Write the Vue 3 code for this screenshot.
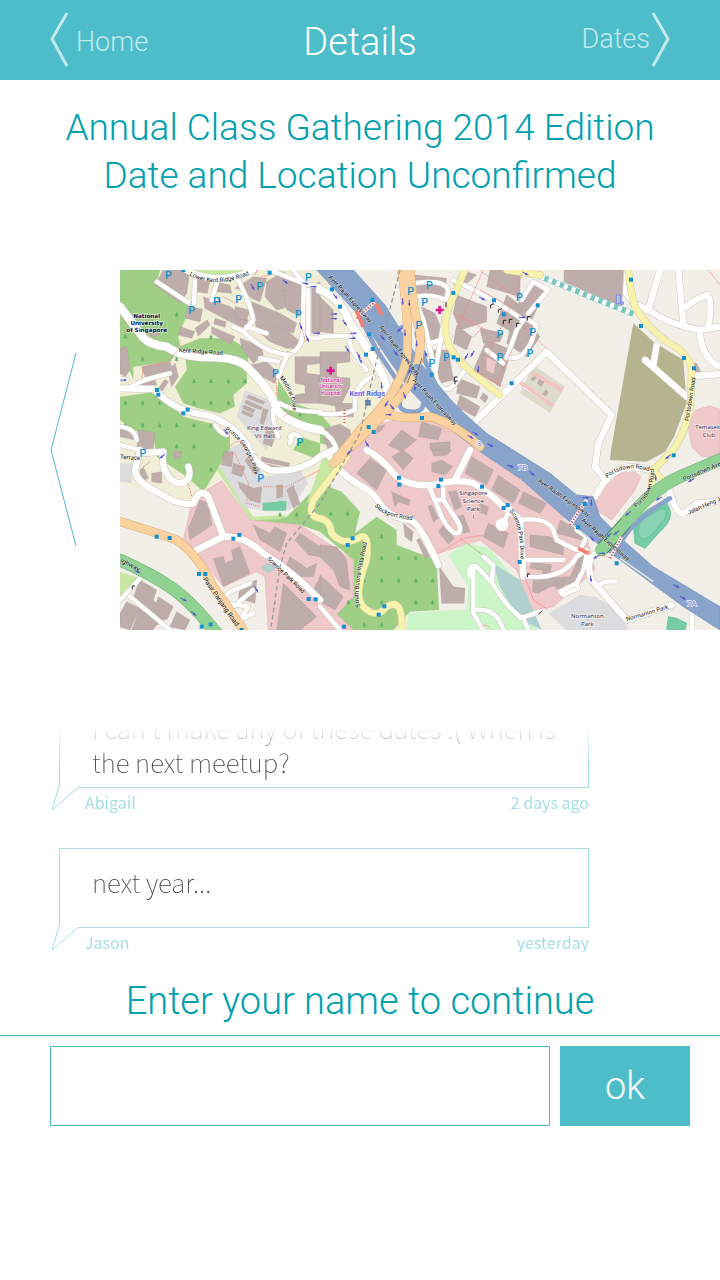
<script setup>
import { ref } from 'vue'

const name = ref('')

const comments = [
  { text: "I can't make any of these dates :( When is the next meetup?", author: 'Abigail', when: '2 days ago' },
  { text: 'next year...', author: 'Jason', when: 'yesterday' },
]

const campus = [
  '0,0 600,0 690,130 790,330 800,440 700,540 620,600 600,620 480,640 310,620 240,670 215,700 100,660 0,640',
]
const forest = [
  '0,0 120,0 110,40 210,110 175,200 180,240 150,275 40,290 40,330 0,230',
  '165,235 240,205 330,205 385,240 380,340 340,375 345,410 300,430 235,415 190,400 165,350 200,300 195,240',
  '0,380 110,365 190,440 270,460 330,500 330,545 310,570 250,665 200,620 110,560 100,500 40,480 0,450',
  '475,330 520,400 600,425 600,480 500,440 470,390',
  '540,500 600,520 600,570 520,540',
  '600,430 650,490 690,540 600,520',
  '390,750 500,740 600,640 665,665 720,725 705,790 770,740 830,780 830,825 950,870 957,1020 870,1025 820,1080 700,1080 650,1033 700,980 700,870 600,785 540,765',
]
const meadow = [
  '300,590 400,740 500,735 560,700 610,560 640,555 660,600 610,660 560,700 480,748 390,750 290,600',
  '215,0 400,0 350,25 250,20',
  '0,905 60,925 0,1000',
]
const pink = [
  '690,560 740,470 850,445 960,445 1060,510 1200,620 1310,700 1400,800 1425,900 1300,1010 1235,1020 1190,900 1080,810 955,850 920,800 800,720 720,650 640,600',
  '305,632 390,750 540,765 700,870 700,980 650,1033 700,1080 445,1080 435,920 410,905 310,950 240,860 190,810 215,700 250,665',
  '1770,408 1725,420 1705,470 1715,530 1745,560 1800,560 1800,418',
  '1430,675 1500,610 1545,605 1562,620 1545,660 1475,750 1430,720',
]
const pale = [
  '985,855 1040,820 1110,835 1190,935 1250,1080 860,1080 865,1030 1040,1018 1045,950',
]
const grey = [
  '375,360 470,400 470,440 440,540 350,440',
  '330,535 385,510 430,620 540,600 565,640 510,720 420,720 370,710 300,590',
  '1380,975 1425,980 1510,1030 1525,1080 1340,1080 1285,1030',
  '0,580 40,580 35,640 0,635',
]
const olive = ['1540,160 1600,215 1690,270 1700,400 1662,500 1635,545 1580,575 1470,570 1473,540']
const water = ['1120,880 1200,930 1265,1080 1195,1045 1140,950', '425,890 445,878 468,893 450,908 430,902']

const buildings = [
  '130,0 210,0 200,70 180,100 105,45', '230,20 270,30 262,70 228,65', '285,35 330,45 335,70 285,65',
  '205,108 248,118 240,155 195,145', '250,80 330,110 385,150 375,175 320,150 255,115', '180,170 225,185 215,205 175,195',
  '225,175 262,150 270,165 235,198', '285,145 318,155 315,172 282,162', '275,170 345,200 330,222 275,190',
  '345,55 400,20 440,25 420,95 395,85 370,60', '345,110 390,120 380,150 345,145', '395,95 480,130 530,160 520,190 440,160 395,145',
  '405,150 500,180 540,215 530,235 500,235 450,215 410,180', '360,205 425,230 430,255 400,280 365,235',
  '390,285 440,275 475,310 465,340 395,305', '440,35 490,5 550,50 545,100 470,120 435,80', '490,60 550,75 545,140 500,120',
  '0,235 20,230 30,300 15,320 0,310', '65,290 150,275 155,290 165,280 175,320 155,350 145,310 75,320', '90,175 120,190 110,200 90,198',
  '115,355 135,328 145,335 128,362', '55,335 105,330 110,345 60,350',
  '575,45 600,35 600,190 575,190', '525,260 600,260 600,280 560,285 560,310 600,315 600,400 525,400 525,375 555,370 555,345 525,340',
  '600,80 640,120 640,190 600,185', '600,245 690,245 690,275 650,280 650,320 690,325 690,350 660,410 600,400',
  '645,400 700,400 700,440 650,440', '620,475 660,462 690,480 697,520 680,540 625,540 612,505',
  '385,375 435,395 430,402 382,384', '378,390 428,412 423,420 375,400', '372,405 405,420 398,430 368,414', '368,420 400,435 395,442 365,430', '430,415 445,420 430,465 420,458', '440,470 470,485 455,530 430,520',
  '55,480 105,488 100,535 50,540', '0,470 45,490 45,510 0,500',
  '905,110 945,130 975,205 930,215', '940,240 985,240 1000,330 960,340', '885,15 980,25 970,90 890,70',
  '1010,75 1100,110 1100,155 1020,180 1000,130', '1010,165 1055,200 1040,240 1000,220', '1100,210 1175,240 1140,350 1060,300',
  '1080,175 1150,190 1140,215 1090,220', '1110,0 1200,0 1200,80 1100,50', '1160,75 1200,105 1200,200 1130,160', '1190,100 1260,200 1220,260 1160,220',
  '1015,325 1080,350 1070,385 1010,370', '1020,375 1080,410 1065,440 1010,410', '1090,368 1105,380 1095,398 1080,385',
  '1230,40 1275,65 1235,150 1190,110', '1332,0 1510,0 1505,110 1332,35', '1000,45 1040,5 1070,15 1040,40', '1240,320 1255,318 1240,332 1232,328', '1258,325 1273,335 1262,350 1252,340', '1277,360 1285,366 1277,378 1268,372',
  '905,455 965,475 955,510 895,500', '845,480 890,510 845,545 805,525', '930,520 990,515 990,540 930,540', '770,470 795,465 785,480 770,490',
  '750,565 800,600 770,660 710,610', '850,540 880,565 850,600 815,560', '935,580 965,570 998,590 975,615 935,605', '935,540 995,540 980,555 940,558',
  '1055,560 1120,600 1100,645 1035,610', '1135,615 1200,660 1180,700 1115,660', '1080,700 1105,710 1100,735 1075,725',
  '815,665 870,690 865,705 835,695 825,710', '985,665 1010,663 1025,710 1005,720', '935,705 955,745 940,757 925,710', '1030,735 1050,785 1030,790 1010,740', '970,765 1003,805 985,823 955,785', '1105,760 1165,790 1150,835 1090,800',
  '850,760 880,785 875,815 855,800', '890,810 900,805 930,860 915,865', '958,890 1000,950 1035,955 1032,1000 965,1000',
  '600,825 650,830 680,870 690,960 660,950 640,900 600,860', '600,915 670,980 645,1020 600,995',
  '240,690 265,700 275,765 210,810 205,775', '280,865 310,860 315,880 340,870 335,840 360,830 390,910 310,950', '400,765 450,790 465,770 500,790 480,845 455,830 420,810',
  '540,790 600,830 600,860 565,855 525,810', '510,860 560,895 590,880 580,920 545,920 500,885', '490,940 590,1040 540,1080 470,1080', '600,920 600,985 580,960',
  '60,930 110,960 100,990 145,1040 105,1070 40,980', '170,1025 210,1050 195,1080 150,1070', '20,995 60,1015 30,1080 0,1070 0,1030', '115,980 160,1010 140,1050 100,1030', '60,1015 110,1060 100,1080 35,1080',
  '60,600 90,575 70,590 85,625 60,640', '95,610 125,605 125,640 95,635', '160,545 185,545 180,565 162,565',
  '310,545 340,545 335,590 305,585', '340,580 375,590 365,620 335,610', '355,635 400,655 425,650 420,700 390,690 360,655', '500,660 520,645 540,700 520,715', '470,645 488,645 488,680 470,685', '425,560 510,580 505,590 425,575', '430,580 500,595 500,605 435,595', '385,560 420,600 400,610 375,570',
  '1210,665 1280,700 1260,730 1195,700', '1230,795 1290,800 1330,820 1330,855 1230,830', '1320,750 1390,790 1385,810 1310,790', '1235,875 1295,885 1290,905 1230,895', '1240,925 1350,920 1385,845 1405,850 1370,940 1290,950 1255,970 1237,965',
  '1268,898 1292,898 1292,922 1268,922', '1308,932 1332,932 1332,956 1308,956', '1720,280 1730,280 1742,305 1722,308', '360,950 410,930 405,1000 355,985',
]

const minor = [
  'M110,35 L205,98', 'M225,20 L222,100', 'M290,40 L275,90', 'M350,20 Q395,110 400,150 L370,185 L340,170', 'M370,185 Q430,245 500,255 Q550,240 548,180 L552,40 L520,0', 'M380,170 L440,190',
  'M600,50 L550,40 L450,0', 'M565,60 L565,205 L600,205', 'M600,200 L680,198', 'M500,260 L475,320', 'M475,275 L420,265',
  'M35,350 Q60,330 150,310', 'M0,325 L20,330', 'M0,470 Q45,475 50,510', 'M0,525 L60,540', 'M285,465 Q300,490 320,495', 'M510,500 Q520,485 540,500 M515,500 L510,520',
  'M600,425 Q520,425 480,400', 'M465,400 Q450,440 475,500',
  'M690,200 Q680,230 740,300', 'M760,320 Q700,340 705,420 Q650,440 600,430', 'M600,480 Q640,500 650,540',
  'M870,0 Q880,90 910,150 Q930,230 950,330 Q980,390 1020,320 L1035,300', 'M880,40 Q970,25 985,60 L980,90 Q930,70 890,80', 'M930,220 L990,200', 'M940,340 L980,100',
  'M1000,30 Q1110,80 1210,150', 'M1160,265 L1190,180 L1210,150', 'M1150,280 L1100,240 M1160,260 Q1210,280 1240,200 L1250,165 L1225,150',
  'M1225,130 L1285,60 L1240,35 L1205,90', 'M1260,380 L1215,350', 'M1520,0 L1515,70 L1540,100',
  'M600,1010 L660,1080', 'M60,925 Q30,960 0,990', 'M30,980 L150,1080',
  'M310,985 L330,965 L390,940 M340,1010 L400,960 M320,1000 L385,1010 L360,1050 L400,1030',
  'M930,655 L965,740 Q990,790 1012,790 Q1030,780 1010,750 L970,690 L970,655', 'M945,690 L970,690', 'M1170,715 L1150,760',
  'M1200,750 Q1280,740 1300,780 L1310,810 L1370,840 M1370,780 L1400,800 L1380,840 M1200,870 L1330,870 M1220,920 Q1330,930 1370,860 L1400,840 M1400,855 L1390,900 L1370,940',
  'M1320,965 L1370,940 L1375,955 L1330,975 Z', 'M1050,920 Q1040,880 1070,890 Q1120,940 1130,960 Q1160,1010 1200,1040 M1060,890 L1060,1030 L1090,1080 M1060,1020 Q1130,1010 1150,1080 M1090,860 L1120,885 L1115,940', 'M1200,1045 L1260,1025 M1210,1045 L1225,1080',
  'M1440,945 Q1450,930 1490,935', 'M1717,1030 L1717,1080',
]
const major = [
  'M200,0 Q290,50 400,0',
  'M0,355 L100,357 L120,375 Q180,430 260,435 Q330,455 380,520 Q400,580 450,600 Q540,610 600,560 L640,540',
  'M1060,460 L1280,245 L1475,435 L1435,520 L1425,590 L1450,620',
  'M1540,100 L1585,120 Q1650,165 1740,180 L1800,170', 'M1620,0 L1585,120', 'M1675,0 L1690,160', 'M1740,180 Q1740,260 1800,290', 'M1700,110 Q1720,90 1760,75 Q1780,90 1765,165', 'M1720,318 L1800,312', 'M1610,225 L1600,285 M1575,270 L1700,380',
  'M60,540 L45,600 Q50,640 120,670 Q180,710 220,700 Q240,650 265,680 L310,800', 'M60,550 L130,545 Q120,610 170,640 Q220,640 205,590',
  'M220,845 L310,800 Q370,795 430,850 Q520,905 600,990',
  'M630,560 Q660,610 710,640 Q760,665 780,700 Q800,740 870,750 Q900,760 955,885', 'M740,540 Q780,560 830,620 Q870,650 940,645 Q1010,625 1060,640 Q1110,670 1150,710 Q1180,730 1200,750 L1210,920',
  'M1005,630 L1050,540', 'M1425,680 L1450,640 Q1500,570 1590,600', 'M1640,640 Q1670,740 1690,730 L1730,700 Q1770,700 1800,690',
  'M1445,845 Q1390,860 1415,930 L1520,1050 L1655,1005',
]
const wide = [
  'M0,110 Q30,150 60,190 Q80,225 140,230 Q180,260 260,262 Q360,260 390,300 Q460,370 470,420 Q510,465 600,480',
  'M600,60 Q660,80 690,160 Q750,240 790,320 L810,390',
]
const yellow = [
  'M1035,0 L1000,80 Q960,160 985,220 Q1000,260 1060,310 L1138,375', 'M1160,0 L1260,15', 'M1525,0 Q1530,60 1545,110 Q1580,170 1640,215 Q1710,250 1715,300 L1712,400 Q1700,480 1660,540 L1600,600 L1595,650', 'M1600,600 L1635,640',
  'M600,745 Q630,750 635,790 Q670,830 715,805 Q750,780 740,870 Q700,980 730,1010 Q770,1050 800,1010 Q850,980 845,1080', 'M600,745 Q560,740 580,690 Q620,640 680,560',
]

const trees = [
  [170, 135], [16, 200], [68, 268], [170, 268], [273, 202], [222, 335], [273, 335], [325, 335], [375, 335], [222, 400], [273, 400], [325, 400], [16, 400], [68, 400], [119, 400], [16, 467], [68, 467], [119, 467], [170, 467], [222, 467], [273, 467], [170, 530], [222, 530], [273, 600], [530, 735], [480, 735],
  [632, 732], [683, 732], [785, 800], [785, 865], [836, 865], [887, 865], [733, 932], [785, 932], [836, 932], [887, 932], [938, 932], [785, 998], [887, 998], [938, 998], [733, 1065], [785, 1065], [490, 400], [540, 435], [685, 998],
]
const parking = [
  [145, 18], [215, 122], [290, 96], [356, 88], [420, 50], [535, 135], [565, 24], [466, 310], [540, 517], [69, 552], [422, 625], [872, 65], [928, 46], [914, 97], [897, 168], [979, 262], [936, 280], [1140, 193], [1140, 264], [1238, 187], [1230, 250], [1198, 82],
]
const stops = [
  [190, 0], [449, 8], [111, 360], [115, 374], [203, 419], [190, 430], [636, 58], [660, 110], [757, 90], [747, 193], [758, 237], [738, 254], [935, 314], [1001, 262], [1014, 269], [1000, 69], [1122, 91], [1151, 133], [1175, 340], [906, 444], [746, 471], [761, 486], [1533, 29], [1563, 168], [1692, 264], [1722, 295], [1253, 106],
  [110, 800], [149, 804], [358, 795], [340, 806], [237, 912], [256, 912], [566, 987], [587, 988], [245, 1070], [272, 1063], [365, 1080], [837, 623], [838, 644], [963, 629], [955, 648], [1086, 650], [1163, 705], [1151, 714], [1199, 876], [698, 805], [683, 825], [793, 1009], [776, 1034], [672, 1070], [1394, 702], [1374, 772], [1490, 880], [1661, 556],
]
const arrows = [
  [495, 35, 35], [555, 40, 10], [580, 50, 0], [542, 168, 70], [562, 205, 70], [590, 190, 0], [10, 330, 0], [397, 50, 60], [299, 90, 90], [317, 485, 50], [642, 132, 0], [642, 146, 0], [673, 157, 50], [700, 190, 0], [697, 205, 0], [681, 236, 60], [720, 270, 60], [645, 78, 50], [715, 255, 60], [848, 94, 90], [868, 98, 90], [840, 178, 140], [855, 188, 90], [786, 202, 50], [826, 248, 50], [890, 220, 90], [917, 250, 70], [884, 350, 80], [853, 375, 70], [800, 400, 120], [815, 410, 50], [785, 346, 90], [805, 434, 0], [1085, 85, 30], [1040, 258, 120], [1058, 250, 120], [1075, 297, 100], [1050, 500, 30], [1065, 490, 30], [1110, 525, 30], [740, 520, 60],
  [128, 558, 140], [190, 988, 30], [220, 1030, 40], [50, 903, 30], [408, 957, 60], [690, 545, 140], [1170, 588, 20], [1235, 610, 40], [1397, 683, 0], [1414, 698, 90], [1415, 805, 50], [1430, 860, 150], [1445, 850, 0], [1412, 925, 80], [1525, 730, 140], [1490, 788, 140], [1468, 795, 140], [1618, 685, 150], [1715, 630, 150], [1645, 560, 140], [1606, 620, 80], [1668, 948, 30], [1687, 983, 30], [1215, 10, 30], [1205, 142, 0], [870, 300, 110], [862, 270, 70],
]
const redPaths = [
  'M180,210 L180,235 L140,275 L70,290 L65,325', 'M545,170 L555,215', 'M500,245 L520,250', 'M455,335 L470,340 L470,380', 'M310,80 L345,100', 'M515,425 L490,440', 'M205,640 L215,680', 'M330,530 Q350,500 380,530', 'M315,560 L345,550 L385,640 L380,700 L420,710', 'M430,650 L500,650 L600,600', 'M955,850 L1030,805 L1090,795 M1020,805 L1090,855', 'M1215,920 L1240,990 L1285,1020', 'M1445,857 L1480,865', 'M1765,0 L1800,45', 'M1200,160 L1280,235',
  'M1000,130 L1140,200 M1080,60 L1200,125 M1090,0 L1010,180 M1060,200 L1090,170 M1180,90 L1090,290 M1060,300 L1150,350 M1175,240 L1130,340', 'M1085,5 L1200,90', 'M410,0 L405,15', 'M425,20 L450,15', 'M1205,15 L1190,60', 'M1085,1070 Q1100,1060 1110,1075',
]
const rail = 'M840,0 L760,310 L720,490 L600,700 L500,820 L480,890 L452,1080'

const straight = [
  { x: 176, y: 246, a: 4, t: 'Kent Ridge Road' },
  { x: 625, y: 22, a: 48, t: 'Ayer Rajah Expressway' },
  { x: 777, y: 172, a: 52, t: 'Ayer Rajah Expressway' },
  { x: 877, y: 332, a: 47, t: 'Ayer Rajah Expressway' },
  { x: 1253, y: 635, a: 35, t: 'Ayer Rajah Expressway' },
  { x: 1383, y: 752, a: 41, t: 'Ayer Rajah Expressway' },
  { x: 440, y: 867, a: 44, t: 'Science Park Road' },
  { x: 1706, y: 454, a: -81, t: 'Portsdown Road' },
  { x: 1692, y: 634, a: -24, t: 'Portsdown Ave' },
  { x: 1706, y: 734, a: -24, t: 'Jalan Heng Jeba' },
  { x: 1520, y: 1054, a: -17, t: 'Normanton Park' },
  { x: 0, y: 566, a: 4, t: 'Terrace' },
]
const curved = [
  { id: 'lkr', d: 'M208,16 Q290,60 400,8', t: 'Lower Kent Ridge Road' },
  { id: 'med', d: 'M478,324 Q515,360 522,450', t: 'Medical Drive' },
  { id: 'pgp', d: 'M315,482 Q375,510 400,600 L408,640', t: "Prince George's Park" },
  { id: 'stock', d: 'M764,708 Q790,745 900,752', t: 'Stockport Road' },
  { id: 'spd', d: 'M1168,725 Q1205,760 1200,890', t: 'Science Park Drive' },
  { id: 'sbv', d: 'M722,1008 Q700,990 750,780', t: 'South Buona Vista Road' },
  { id: 'pdr1', d: 'M1462,625 Q1510,580 1590,604', t: 'Portsdown Road' },
  { id: 'pdr3', d: 'M1548,713 Q1612,665 1600,575', t: 'Portsdown Road' },
]
</script>

<template>
  <div class="page">
    <header class="bar">
      <a class="nav" href="#home">
        <svg class="nav-arrow" viewBox="0 0 20 56" aria-hidden="true"><path d="M17,1 L2,27 L17,54" /></svg>
        <span class="home-label">Home</span>
      </a>
      <h1>Details</h1>
      <a class="nav nav-next" href="#dates">
        <span class="dates-label">Dates</span>
        <svg class="nav-arrow" viewBox="0 0 20 56" aria-hidden="true"><path d="M3,1 L18,27 L3,54" /></svg>
      </a>
    </header>

    <main>
      <h2 class="event">Annual Class Gathering 2014 Edition<br>Date and Location Unconfirmed</h2>

      <section class="location">
        <button class="prev" type="button" aria-label="Previous">
          <svg viewBox="0 0 28 194" aria-hidden="true"><path d="M26,0 L1,97 L26,193" /></svg>
        </button>
        <svg class="map" viewBox="0 0 1800 1080" preserveAspectRatio="xMinYMid slice" role="img" aria-label="Map">
          <rect width="1800" height="1080" fill="#f2efe9" />
          <polygon v-for="p in campus" :key="p" :points="p" fill="#f0eed7" />
          <polygon v-for="p in forest" :key="p" :points="p" fill="#9fcf85" />
          <polygon v-for="p in meadow" :key="p" :points="p" fill="#c8e8a2" />
          <polygon v-for="p in pink" :key="p" :points="p" class="estate" />
          <polygon v-for="p in pale" :key="p" :points="p" fill="#cbf5c6" />
          <polygon v-for="p in grey" :key="p" :points="p" fill="#dcdcde" />
          <polygon v-for="p in olive" :key="p" :points="p" fill="#b5b48f" />
          <polygon points="1240,285 1335,350 1290,428 1200,370" fill="#dddccb" />
          <polygon v-for="p in water" :key="p" :points="p" fill="#b0d0cf" />
          <polygon v-for="p in buildings" :key="p" :points="p" class="building" />
          <path d="M1098,260 L1128,275 L1120,312 L1100,300 Z" fill="#efc8ca" />
          <path d="M428,698 L475,695 L475,692 L500,694 L498,722 L428,722 Z" fill="#76cca4" />
          <path d="M1542,790 Q1535,750 1580,720 L1620,700 L1640,695 L1650,720 Q1660,750 1620,785 L1575,835 L1545,820 Z" class="pitch" />
          <path d="M1553,785 Q1555,750 1590,735 L1625,715 Q1645,715 1635,745 L1590,800 Q1560,820 1553,785 Z" class="track" />
          <path d="M1645,1040 L1670,1045 L1700,1060 L1695,1080 L1640,1080 Z" class="pitch" />
          <path d="M1262,20 L1540,132" class="teal-road" /><path d="M1262,20 L1540,132" class="teal-dash" />
          <path v-for="(t, i) in trees" :key="i" :d="`M${t[0]},${t[1] - 8} l-4,7 h2 l-3,5 h10 l-3,-5 h2 z m0,12 v4`" class="tree" />

          <path v-for="p in minor" :key="'c' + p" :d="p" class="minor-case" />
          <path v-for="p in major" :key="'c' + p" :d="p" class="major-case" />
          <path v-for="p in wide" :key="'c' + p" :d="p" class="wide-case" />
          <path v-for="p in minor" :key="p" :d="p" class="minor" />
          <path v-for="p in major" :key="p" :d="p" class="major" />
          <path v-for="p in wide" :key="p" :d="p" class="wide" />
          <path v-for="p in yellow" :key="'c' + p" :d="p" class="yellow-case" />
          <path v-for="p in yellow" :key="p" :d="p" class="yellow" />
          <circle cx="1146" cy="764" r="19" fill="#fff" />
          <path d="M1240,310 L1322,358 M1205,340 L1295,405" class="pink-row" />

          <path d="M0,755 Q100,785 170,810 Q230,850 280,950 Q330,1020 370,1080" class="orange-case" />
          <path d="M0,755 Q100,785 170,810 Q230,850 280,950 Q330,1020 370,1080" class="orange" />
          <path d="M0,870 Q90,910 150,950 Q210,990 290,1090" class="green-case" />
          <path d="M0,870 Q90,910 150,950 Q210,990 290,1090" class="green" />

          <polygon points="590,0 700,0 795,105 910,290 1010,410 1100,490 1290,610 1370,675 1420,680 1440,740 1520,820 1600,890 1800,1010 1800,1080 1690,1010 1500,870 1400,800 1200,625 1080,545 960,455 870,360 800,260 720,140" class="motorway" />
          <path d="M750,210 L840,345 M1330,745 L1440,830 M1500,865 L1600,935" class="motorway-edge" />
          <path d="M720,140 L770,240 L850,360 M890,190 Q905,260 945,340" class="ramp" />
          <path d="M770,150 Q820,190 850,170" class="ramp" />
          <path d="M850,370 Q820,420 870,425 Q925,430 905,370" class="ramp" />
          <path d="M1500,820 Q1540,750 1650,685" class="ramp" />
          <path d="M845,0 Q870,180 860,270 Q830,380 720,480 L640,580 M870,0 Q880,130 900,180 Q910,300 840,380 Q800,430 640,580 M790,430 Q850,450 930,440 Q1000,460 1080,530" class="orange-case" />
          <path d="M845,0 Q870,180 860,270 Q830,380 720,480 L640,580 M870,0 Q880,130 900,180 Q910,300 840,380 Q800,430 640,580 M790,430 Q850,450 930,440 Q1000,460 1080,530" class="orange" />
          <path d="M890,300 Q940,370 1010,430" class="through" />
          <path d="M1445,840 L1510,765 Q1590,660 1680,620 L1810,565" class="green-case" />
          <path d="M1445,840 L1510,765 Q1590,660 1680,620 L1810,565" class="green" />
          <path d="M1435,820 L1505,745 M1460,850 L1530,772 M862,340 L880,290 M886,330 L905,265" class="dark-line" />
          <path d="M1350,765 L1400,690 M1470,865 L1505,800 M710,145 L765,95 M673,420 L673,465" class="bridge" />
          <path d="M1350,765 L1400,690 M1470,865 L1505,800 M710,145 L765,95 M673,420 L673,465" class="bridge-dash" />
          <path d="M768,100 L785,135 M710,122 L730,170 M1375,835 L1405,850" class="crossing" />
          <path v-for="p in redPaths" :key="p" :d="p" class="footway" />
          <path :d="rail" class="rail" />
          <path v-for="(a, i) in arrows" :key="i" d="M-9,0 H3 M3,-2 L9,0 L3,2 Z" :transform="`translate(${a[0]} ${a[1]}) rotate(${a[2]})`" class="oneway" />
          <rect v-for="(s, i) in stops" :key="i" :x="s[0] - 6" :y="s[1] - 6" width="12" height="12" fill="#1590cf" />
          <rect x="735" y="390" width="17" height="17" fill="#6b82aa" />
          <path d="M1489,75 h12 v26 h-12 z M1503,96 h7 v7 h-7 z" class="lift" />
          <path d="M632,290 v24 M620,302 h24 M959,108 v24 M947,120 h24" class="hospital" />
          <path d="M1003,335 v-14 h9 M1005,343 v-10 h9 M1150,163 v-12 h9 M1168,160 v-12 h9 M1190,172 v-12 h9 M1112,115 v-10 l10,-4 M1135,128 v-8 l10,-4 M978,112 v-16 M1222,152 v-12 h9 M37,958 v-10 h8 M1222,922 v-10 h8 M1255,1032 l10,-8" class="gate" />

          <g class="parking"><text v-for="(p, i) in parking" :key="i" :x="p[0]" :y="p[1] + 2">P</text></g>
          <g class="road-name">
            <text v-for="(s, i) in straight" :key="i" :transform="`translate(${s.x} ${s.y}) rotate(${s.a})`">{{ s.t }}</text>
            <template v-for="c in curved" :key="c.id">
              <path :id="c.id" :d="c.d" fill="none" />
              <text><textPath :href="'#' + c.id">{{ c.t }}</textPath></text>
            </template>
          </g>
          <g class="road-name big">
            <text transform="translate(248 928) rotate(55)">Pasir Panjang Road</text>
            <text transform="translate(0 876) rotate(27)">ighway</text>
          </g>
          <g class="place strong"><text x="80" y="143">National</text><text x="80" y="164">University</text><text x="80" y="185">of Singapore</text></g>
          <g class="place">
            <text x="433" y="480">King Edward</text><text x="433" y="504">VII Hall</text>
            <text x="1060" y="674">Singapore</text><text x="1060" y="699">Science</text><text x="1060" y="723">Park</text><text x="1060" y="748">I</text>
            <text x="1763" y="478">Temasek</text><text x="1767" y="502">Club</text>
            <text x="1402" y="1045">Normanton</text><text x="1402" y="1069">Park</text>
          </g>
          <g class="clinic"><text x="633" y="336">National</text><text x="633" y="355">University</text><text x="633" y="374">Hospital</text></g>
          <g class="station"><text x="742" y="379">Kent Ridge</text></g>
          <g class="junction"><text x="1077" y="527">8</text><text x="1208" y="599">7B</text><text x="1715" y="1009">7A</text></g>
        </svg>
      </section>

      <section class="comments" aria-label="Comments">
        <article v-for="c in comments" :key="c.author" class="comment">
          <div class="bubble">
            <p>{{ c.text }}</p>
            <svg class="tail" viewBox="0 0 29 30" aria-hidden="true">
              <path d="M8,2 H9 V5 H28 V6 H8 Z" class="tail-gap" />
              <path d="M8.5,0 V3 L1,28 L27,5.5 H29" class="tail-line" />
            </svg>
          </div>
          <footer><span>{{ c.author }}</span><time>{{ c.when }}</time></footer>
        </article>
      </section>

      <form @submit.prevent>
        <label for="name">Enter your name to continue</label>
        <div class="entry">
          <input id="name" v-model="name" type="text" autocomplete="off">
          <button class="ok" type="submit">ok</button>
        </div>
      </form>
    </main>
  </div>
</template>

<style>
body { background: #fff; }
</style>

<style scoped>
* { box-sizing: border-box; }
.page { font-family: Roboto, "Open Sans", sans-serif; font-weight: 300; overflow: hidden; }
.bar { display: grid; grid-template-columns: 1fr auto 1fr; height: 80px; padding: 0 50px; background: #4cbdc9; color: #fff; align-items: center; }
h1 { margin: 0; font-size: 38px; line-height: 48px; font-weight: 300; padding-top: 4px; }
.nav { display: flex; align-items: center; gap: 6px; color: #c3e9ed; text-decoration: none; font-size: 27px; line-height: 34px; }
.nav-next { justify-content: flex-end; gap: 0; }
.nav-arrow { width: 20px; height: 56px; fill: none; stroke: #c3e9ed; stroke-width: 3; }
.home-label { padding-top: 3px; }
.dates-label { padding-bottom: 3px; }
.event { margin: 24px 0 0; text-align: center; color: #00a0ae; font-size: 37px; line-height: 48px; font-weight: 300; }
.location { display: flex; align-items: center; margin-top: 70px; }
.prev { flex: 0 0 120px; display: flex; padding: 0 0 0 50px; border: 0; background: none; }
.prev svg { width: 28px; height: 194px; fill: none; stroke: #4cbdc9; stroke-width: 1; }
.map { flex: 1; min-width: 0; height: 360px; display: block; }
.comments { display: flex; flex-direction: column; justify-content: flex-end; gap: 36px; height: 224px; margin-top: 98px; padding: 0 131px 0 52px; overflow: hidden; font-family: "Noto Sans CJK JP", sans-serif; -webkit-mask-image: linear-gradient(transparent, #000 34px); mask-image: linear-gradient(transparent, #000 34px); }
.comment { flex: none; }
.bubble { position: relative; min-height: 80px; margin-left: 7px; padding: 16px 20px 8px 32px; border: 1px solid #a5dfe5; }
.bubble p { margin: 0; font-size: 26px; line-height: 34px; font-weight: 100; color: #444; }
.tail { position: absolute; left: -9px; bottom: -25px; width: 29px; height: 30px; fill: none; }
.tail-gap { fill: #fff; }
.tail-line { stroke: #a5dfe5; stroke-width: 1; }
.comment footer { display: flex; justify-content: space-between; padding-left: 33px; font-size: 16px; line-height: 24px; height: 24px; padding-top: 2px; font-weight: 400; color: #a5dfe5; }
form { margin-top: 25px; }
label { display: block; text-align: center; color: #00a0ae; font-size: 38px; line-height: 48px; padding-bottom: 10px; border-bottom: 1px solid #4cbdc9; }
.entry { display: flex; gap: 10px; padding: 10px 30px 10px 50px; }
.entry input { flex: 1; min-width: 0; height: 80px; border: 1px solid #4cbdc9; border-radius: 0; padding: 0 20px; font: inherit; font-size: 38px; background: #fff; }
.ok { flex: 0 0 130px; border: 0; background: #4cbdc9; color: #fff; font: inherit; font-size: 38px; line-height: 48px; }

.estate { fill: #efc8ca; stroke: #e9b4b6; stroke-width: 2; }
.building { fill: #bfadab; stroke: #aa9896; stroke-width: 1; }
.pitch { fill: #76cca4; stroke: #5eb995; stroke-width: 2; }
.track { fill: #8bd3b6; stroke: #57b797; stroke-width: 2; }
.tree { fill: #62b567; stroke: #62b567; stroke-width: 1; }
.minor-case, .minor, .major-case, .major, .wide-case, .wide, .yellow-case, .yellow, .orange-case, .orange, .green-case, .green, .ramp, .through { fill: none; stroke-linecap: round; stroke-linejoin: round; }
.minor-case { stroke: #c9c6c1; stroke-width: 16; }
.minor { stroke: #fff; stroke-width: 13; }
.major-case { stroke: #c9c6c1; stroke-width: 22; }
.major { stroke: #fff; stroke-width: 19; }
.wide-case { stroke: #c9c6c1; stroke-width: 27; }
.wide { stroke: #fff; stroke-width: 24; }
.yellow-case { stroke: #cfcf98; stroke-width: 22; }
.yellow { stroke: #f7f3ae; stroke-width: 19; }
.orange-case { stroke: #d9ad72; stroke-width: 27; }
.orange { stroke: #fad2a0; stroke-width: 24; }
.green-case { stroke: #6bae6f; stroke-width: 38; }
.green { stroke: #8fd291; stroke-width: 35; }
.ramp { stroke: #89a4cb; stroke-width: 14; }
.through { stroke: #89a4cb; stroke-width: 36; }
.motorway { fill: #89a4cb; stroke: #7590ba; stroke-width: 2; }
.motorway-edge { fill: none; stroke: #e5e5df; stroke-width: 5; }
.teal-road { stroke: #7bc6c0; stroke-width: 17; }
.teal-dash { stroke: #fff; stroke-width: 15; stroke-dasharray: 12 13; }
.pink-row { stroke: #f2c4c4; stroke-width: 12; stroke-linecap: round; }
.dark-line { stroke: #40504a; stroke-width: 2; }
.bridge { stroke: #fff; stroke-width: 10; }
.bridge-dash { stroke: #d64d4d; stroke-width: 6; stroke-dasharray: 4 5; }
.crossing { stroke: #f27d73; stroke-width: 12; }
.footway { fill: none; stroke: #f38782; stroke-width: 3; stroke-dasharray: 4 3; }
.rail { fill: none; stroke: #999; stroke-width: 4; stroke-dasharray: 13 9; }
.oneway { fill: #5555d7; stroke: #5555d7; stroke-width: 3; }
.lift { fill: #a7c7dc; stroke: #8585e5; stroke-width: 3; }
.hospital { stroke: #da1595; stroke-width: 8; }
.gate { fill: none; stroke: #222; stroke-width: 3; }
.map text { font-weight: 400; }
.parking text { font-family: Roboto, sans-serif; font-size: 32px; font-weight: 500; fill: #0f92d4; text-anchor: middle; dominant-baseline: middle; }
.road-name text { font-family: Roboto, sans-serif; font-size: 18px; fill: #111; stroke: #fff; stroke-opacity: 0.5; stroke-width: 3; paint-order: stroke; }
.road-name.big text { font-size: 20px; }
.place text, .clinic text, .station text, .junction text { text-anchor: middle; paint-order: stroke; stroke: #fff; stroke-opacity: 0.6; stroke-width: 4; }
.place text { font-family: "Open Sans", sans-serif; font-size: 18px; fill: #282850; }
.place.strong text { font-family: "DejaVu Sans", sans-serif; font-size: 17px; font-weight: 700; fill: #0d0d50; }
.clinic text { font-family: Roboto, sans-serif; font-size: 16px; fill: #da1595; }
.station text { font-family: Roboto, sans-serif; font-size: 22px; font-weight: 700; fill: #6666ee; }
.junction text { font-family: "Open Sans", sans-serif; font-size: 24px; fill: #7777e5; stroke-opacity: 0.9; }
</style>
